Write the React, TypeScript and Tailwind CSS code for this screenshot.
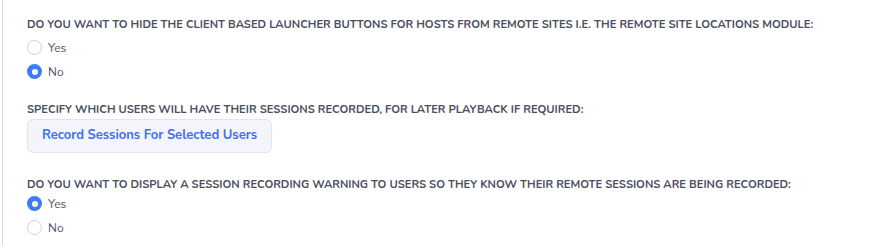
import React, { useState } from "react";

type Option = { label: string; value: string };

const yesNo: Option[] = [
  { label: "Yes", value: "yes" },
  { label: "No", value: "no" },
];

function Heading({ children }: { children: React.ReactNode }) {
  return (
    <p className="text-[11.2px] font-bold uppercase leading-[14px] text-[#4a4f5e]">{children}</p>
  );
}

function RadioGroup({
  value,
  onChange,
  className,
}: {
  value: string;
  onChange: (v: string) => void;
  className: string;
}) {
  return (
    <div className={"flex flex-col gap-[9px] " + className}>
      {yesNo.map((opt) => {
        const checked = opt.value === value;
        return (
          <label
            key={opt.value}
            className="flex h-[15px] cursor-pointer items-center gap-[6px]"
            onClick={() => onChange(opt.value)}
          >
            <span
              className={
                checked
                  ? "flex size-[15px] items-center justify-center rounded-full bg-[#3c7cf5]"
                  : "size-[15px] rounded-full border border-[#cfd2da] bg-white"
              }
            >
              {checked && <span className="size-[6px] rounded-full bg-white" />}
            </span>
            <span className="text-[12px] text-[#4f5463]">{opt.label}</span>
          </label>
        );
      })}
    </div>
  );
}

export default function App() {
  const [hideLaunchers, setHideLaunchers] = useState("no");
  const [showWarning, setShowWarning] = useState("yes");

  return (
    <div
      className="h-[246px] w-[880px] bg-white"
      style={{ fontFamily: '"Nunito", "Lato", "Open Sans", sans-serif' }}
    >
      <div className="ml-[2px] h-full border-l border-[#d9dbe0] pl-[24px] pt-[18px]">
        <Heading>
          Do you want to hide the client based launcher buttons for hosts from remote sites i.e. the
          remote site locations module:
        </Heading>
        <RadioGroup className="mt-[8px]" value={hideLaunchers} onChange={setHideLaunchers} />

        <div className="mt-[24px]">
          <Heading>Specify which users will have their sessions recorded, for later playback if required:</Heading>
          <button className="mt-[2px] h-[34px] w-[245px] rounded-[6px] border border-[#e3e5ec] bg-[#f4f5fa] text-[13px] font-bold text-[#3d6ef3]">
            Record Sessions For Selected Users
          </button>
        </div>

        <div className="mt-[25px]">
          <Heading>
            Do you want to display a session recording warning to users so they know their remote
            sessions are being recorded:
          </Heading>
          <RadioGroup className="mt-[4px]" value={showWarning} onChange={setShowWarning} />
        </div>
      </div>
    </div>
  );
}
